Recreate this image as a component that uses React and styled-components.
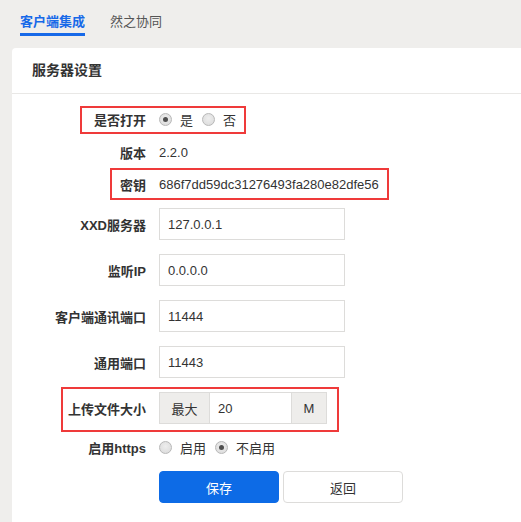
import React from 'react'
import styled, { createGlobalStyle } from 'styled-components'

const GlobalStyle = createGlobalStyle`
    html, body {
        margin : 0;
        padding : 0;
        background : #efeeec;
        font-family : "Liberation Sans", "Noto Sans CJK SC", sans-serif;
        font-size : 13px;
        color : #333;
        overflow : hidden;
    }
`

const Page = styled.div`
    min-height : 100vh;
`

const TabBar = styled.div`
    display : flex;
    gap : 25px;
    height : 48px;
    padding : 13px 0 0 20px;
    box-sizing : border-box;
`

const Tab = styled.div`
    height : 20px;
    line-height : 18px;
    font-size : 13px;
    color : ${p => p.$active ? '#1769e8' : '#555'};
    font-weight : ${p => p.$active ? 700 : 400};
    border-bottom : 3px solid ${p => p.$active ? '#1769e8' : 'transparent'};
    cursor : pointer;
`

const Card = styled.div`
    margin-left : 12px;
    background : #fff;
    border-top-left-radius : 4px;
    min-height : 480px;
`

const CardHeader = styled.div`
    height : 45px;
    line-height : 45px;
    padding-left : 20px;
    font-size : 14px;
    font-weight : 600;
    color : #333;
    border-bottom : 1px solid #e9e8e6;
`

const Form = styled.div`
    padding : 9px 0 0 20px;
`

const Row = styled.div`
    position : relative;
    display : flex;
    align-items : center;
    min-height : 32px;
    margin-bottom : ${p => p.$gap ?? 14}px;
`

const Label = styled.div`
    width : 114px;
    margin-right : 13px;
    flex-shrink : 0;
    text-align : right;
    font-weight : 700;
    color : #333;
`

const Value = styled.span`
    color : #333;
`

// red frame drawn over a row
const Mark = styled.div`
    position : absolute;
    top : ${p => p.$top}px;
    left : ${p => p.$left}px;
    width : ${p => p.$width}px;
    height : ${p => p.$height}px;
    border : 2px solid #ef3a3a;
    box-sizing : border-box;
    pointer-events : none;
`

const Radios = styled.div`
    display : flex;
    align-items : center;
    gap : 9px;
`

const RadioOption = styled.label`
    display : flex;
    align-items : center;
    gap : 8px;
    color : #333;
    cursor : pointer;
`

const RadioDot = styled.span`
    position : relative;
    width : 11px;
    height : 11px;
    border-radius : 50%;
    border : 1px solid #b8b8b8;
    background : radial-gradient(circle at 50% 40%, #eeeeee, #d9d9d9);
    &::after {
        content : '';
        position : absolute;
        top : 3px;
        left : 3px;
        width : 5px;
        height : 5px;
        border-radius : 50%;
        background : #4f4f4f;
        display : ${p => p.$checked ? 'block' : 'none'};
    }
`

const TextInput = styled.input`
    width : ${p => p.$width ?? 186}px;
    height : 32px;
    box-sizing : border-box;
    border : 1px solid #dddcda;
    padding : 0 8px;
    font : inherit;
    font-size : 13px;
    color : #333;
    outline : none;
    background : #fff;
`

const InputGroup = styled.div`
    display : flex;
    height : 32px;
`

const Addon = styled.span`
    width : ${p => p.$width}px;
    box-sizing : border-box;
    display : flex;
    align-items : center;
    justify-content : center;
    background : #eeedeb;
    border : 1px solid #dddcda;
    color : #333;
`

const GroupInput = styled(TextInput)`
    border-left : 0;
    border-right : 0;
`

const Buttons = styled.div`
    display : flex;
    gap : 4px;
`

const Button = styled.button`
    width : 120px;
    height : 32px;
    border-radius : 4px;
    font : inherit;
    font-size : 13px;
    cursor : pointer;
    border : 1px solid ${p => p.$primary ? '#0d6be6' : '#dddcda'};
    background : ${p => p.$primary ? '#0d6be6' : '#fff'};
    color : ${p => p.$primary ? '#fff' : '#333'};
`

const Radio = ({ checked, children }) => (
    <RadioOption>
        <RadioDot $checked={checked} />
        {children}
    </RadioOption>
)

const fields = [
    { label : 'XXD服务器', value : '127.0.0.1' },
    { label : '监听IP', value : '0.0.0.0' },
    { label : '客户端通讯端口', value : '11444' },
    { label : '通用端口', value : '11443' },
]

export default function App () {
    return (
        <Page>
            <GlobalStyle />
            <TabBar>
                <Tab $active>客户端集成</Tab>
                <Tab>然之协同</Tab>
            </TabBar>
            <Card>
                <CardHeader>服务器设置</CardHeader>
                <Form>
                    <Row $gap={1}>
                        <Label>是否打开</Label>
                        <Radios>
                            <Radio checked>是</Radio>
                            <Radio>否</Radio>
                        </Radios>
                        <Mark $top={3} $left={48} $width={166} $height={28} />
                    </Row>
                    <Row $gap={0}>
                        <Label>版本</Label>
                        <Value>2.2.0</Value>
                    </Row>
                    <Row $gap={8}>
                        <Label>密钥</Label>
                        <Value>686f7dd59dc31276493fa280e82dfe56</Value>
                        <Mark $top={0} $left={78} $width={279} $height={32} />
                    </Row>
                    {fields.map(f => (
                        <Row key={f.label}>
                            <Label>{f.label}</Label>
                            <TextInput defaultValue={f.value} />
                        </Row>
                    ))}
                    <Row $gap={7}>
                        <Label>上传文件大小</Label>
                        <InputGroup>
                            <Addon $width={51}>最大</Addon>
                            <GroupInput $width={81} defaultValue='20' />
                            <Addon $width={36}>M</Addon>
                        </InputGroup>
                        <Mark $top={-5} $left={29} $width={278} $height={45} />
                    </Row>
                    <Row $gap={8}>
                        <Label>启用https</Label>
                        <Radios>
                            <Radio>启用</Radio>
                            <Radio checked>不启用</Radio>
                        </Radios>
                    </Row>
                    <Row>
                        <Label />
                        <Buttons>
                            <Button $primary>保存</Button>
                            <Button>返回</Button>
                        </Buttons>
                    </Row>
                </Form>
            </Card>
        </Page>
    )
}
